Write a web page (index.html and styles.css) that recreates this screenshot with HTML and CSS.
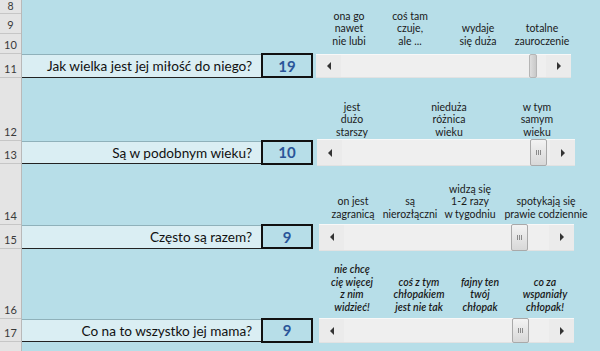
FILE: index.html
```html
<!doctype html>
<html>
 <head>
  <meta charset="utf-8">
  <title>Ankieta</title>
  <link rel="stylesheet" href="styles.css">
 </head>
 <body>
  <div class="sheet">
   <div class="heads">
    <div class="r8">8</div>
    <div class="r20">9</div>
    <div class="r20">10</div>
    <div class="r24">11</div>
    <div class="r63">12</div>
    <div class="r23">13</div>
    <div class="r61">14</div>
    <div class="r24">15</div>
    <div class="r70">16</div>
    <div class="r23">17</div>
    <div class="r20"></div>
   </div>

   <div class="body">
    <div class="opts o1">
     <span>ona go<br>nawet<br>nie lubi</span>
     <span>coś tam<br>czuje,<br>ale ...</span>
     <span>wydaje<br>się duża</span>
     <span>totalne<br>zauroczenie</span>
    </div>
    <div class="q r24">
     <div class="qlabel">Jak wielka jest jej miłość do niego?</div>
     <div class="qval">19</div>
     <div class="sb sb1">
      <span class="btn left"></span>
      <span class="track"><span class="thumb thin" style="left:188px"></span></span>
      <span class="btn right"></span>
     </div>
    </div>

    <div class="opts o2">
     <span>jest<br>dużo<br>starszy</span>
     <span>nieduża<br>różnica<br>wieku</span>
     <span>w tym<br>samym<br>wieku</span>
    </div>
    <div class="q r23">
     <div class="qlabel">Są w podobnym wieku?</div>
     <div class="qval">10</div>
     <div class="sb sb2">
      <span class="btn left"></span>
      <span class="track"><span class="thumb" style="left:188px"></span></span>
      <span class="btn right"></span>
     </div>
    </div>

    <div class="opts o3">
     <span>on jest<br>zagranicą</span>
     <span>są<br>nierozłączni</span>
     <span>widzą się<br>1-2 razy<br>w tygodniu</span>
     <span>spotykają się<br>prawie codziennie</span>
    </div>
    <div class="q r24">
     <div class="qlabel">Często są razem?</div>
     <div class="qval">9</div>
     <div class="sb sb3">
      <span class="btn left"></span>
      <span class="track"><span class="thumb" style="left:167px"></span></span>
      <span class="btn right"></span>
     </div>
    </div>

    <div class="opts o4">
     <span>nie chcę<br>cię więcej<br>z nim<br>widzieć!</span>
     <span>coś z tym<br>chłopakiem<br>jest nie tak</span>
     <span>fajny ten<br>twój<br>chłopak</span>
     <span>co za<br>wspaniały<br>chłopak!</span>
    </div>
    <div class="q r23">
     <div class="qlabel">Co na to wszystko jej mama?</div>
     <div class="qval">9</div>
     <div class="sb sb4">
      <span class="btn left"></span>
      <span class="track"><span class="thumb" style="left:168px"></span></span>
      <span class="btn right"></span>
     </div>
    </div>
   </div>
  </div>
 </body>
</html>
```

FILE: styles.css
```css
body { margin: 0; background: #b7dee8; font-family: Lato, "Open Sans", sans-serif; color: #111; }
.sheet { display: flex; height: 351px; overflow: hidden; }

.heads { width: 22px; flex: none; background: #e4e4e4; border-right: 1px solid #b9b9b9; box-sizing: border-box; }
.heads div { box-sizing: border-box; border-bottom: 1px solid #c6c6c6; display: flex; align-items: flex-end; justify-content: center; padding-bottom: 3px; font-size: 11px; color: #3a3a3a; line-height: 11px; }
.heads .r8 { padding-bottom: 1px; font-size: 10.5px; }
.r8 { height: 14px; }
.r20 { height: 20px; }
.r23 { height: 23px; }
.r24 { height: 24px; }
.r61 { height: 61px; }
.r63 { height: 63px; }
.r70 { height: 70px; }

.body { flex: 1; display: flex; flex-direction: column; }

.opts { display: grid; align-items: end; padding-left: 294px; box-sizing: border-box; font-size: 10.5px; line-height: 12.5px; color: #1a1a1a; }
.opts span { justify-self: center; width: max-content; text-align: center; }
.o1 { height: 54px; padding-bottom: 7px; grid-template-columns: 66px 56px 80px 48px; }
.o2 { height: 63px; padding-bottom: 3px; grid-template-columns: 72px 122px 54px; }
.o3 { height: 61px; padding-bottom: 5px; grid-template-columns: 74px 40px 80px 72px; }
.o4 { height: 70px; padding-bottom: 6px; grid-template-columns: 72px 62px 60px 70px; font-style: italic; font-weight: 600; }

.q { display: flex; align-items: center; flex: none; }
.qlabel { width: 239px; height: 100%; box-sizing: border-box; background: #daeef3; border-top: 1px solid #8fb1ba; border-bottom: 1px solid #222; display: flex; align-items: center; justify-content: flex-end; padding-right: 9px; font-size: 13.6px; }
.qval { width: 52px; height: 25px; margin-top: -1px; box-sizing: border-box; border: 2px solid #111; background: #b7dee8; display: flex; align-items: center; justify-content: center; font-size: 15px; font-weight: bold; color: #2a5599; }

.sb { display: flex; width: 256px; margin-left: 5px; box-sizing: border-box; background: #efefef; border-top: 1px solid #f8f8f8; border-bottom: 1px solid #e2e2e2; }
.sb1 { height: 24px; margin-left: 3px; width: 255px; }
.sb2 { height: 27px; margin-left: 4px; width: 258px; }
.sb3 { height: 27px; margin-left: 6px; width: 255px; }
.sb4 { height: 25px; margin-left: 6px; width: 255px; }

.btn { width: 25px; flex: none; background: #ebebeb; display: flex; align-items: center; justify-content: center; }
.btn::before { content: ""; border-top: 4px solid transparent; border-bottom: 4px solid transparent; }
.btn.left::before { border-right: 4px solid #333; }
.btn.right::before { border-left: 4px solid #333; }
.track { flex: 1; position: relative; }
.thumb { position: absolute; top: -1px; bottom: -1px; width: 17px; box-sizing: border-box; border: 1px solid #a9a9a9; border-radius: 2px; background: linear-gradient(#f3f3f3, #d8d8d8); display: flex; align-items: center; justify-content: center; }
.thumb::before { content: ""; width: 5px; height: 5px; background: repeating-linear-gradient(90deg, #8a8a8a 0 1px, transparent 1px 2px); }
.thumb.thin { width: 8px; border-color: #b5b5b5; background: linear-gradient(90deg, #dedede, #c8c8c8); }
.thumb.thin::before { display: none; }
```
